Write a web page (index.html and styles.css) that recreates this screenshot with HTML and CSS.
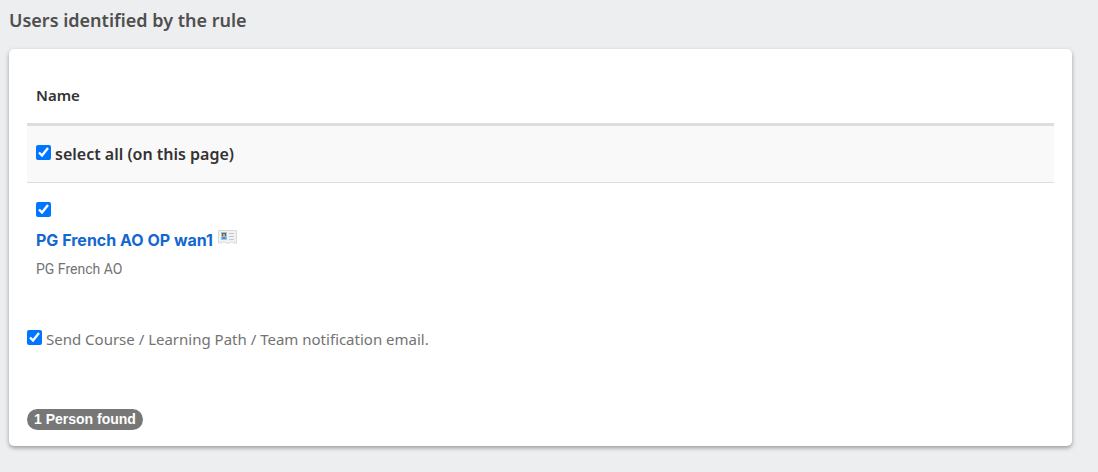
FILE: index.html
```
<!DOCTYPE html>
<html lang="en">

<head>
  <meta charset="utf-8">
  <title>Users identified by the rule</title>
  <link rel="stylesheet" href="styles.css">
</head>

<body>
  <h2 class="page-title">Users identified by the rule</h2>
  <div class="panel">
    <table class="users-table">
      <thead>
        <tr>
          <th scope="col">Name</th>
        </tr>
      </thead>
      <tbody>
        <tr class="select-row">
          <td>
            <input type="checkbox" id="selectAll" checked>
            <label for="selectAll">select all (on this page)</label>
          </td>
        </tr>
        <tr class="user-row">
          <td>
            <input type="checkbox" id="user1" aria-label="PG French AO OP wan1" checked>
            <div class="user-name">
              <a href="#">PG French AO OP wan1</a>
              <svg class="card-icon" viewBox="0 0 19 14" width="19" height="14" aria-hidden="true">
                <path d="M.5 .5h18v12.500h-3l-1-1h-2l-1 1h-4l-1-1h-2l-1 1h-3z" fill="#f2f2f2" stroke="#d8d8d8"/>
                <path d="M3 2h6v8h-6z" fill="#8fc5ee"/>
                <path d="M4 3h4v3h-4z" fill="#806345"/>
                <path d="M5 4h2v3h-2z" fill="#d5a478"/>
                <path d="M4 7h4v2h-4z" fill="#4d95d3"/>
                <path d="M11 3.500h5M11 6.500h5M11 9.500h5" stroke="#b9c9d5"/>
              </svg>
            </div>
            <div class="user-group">PG French AO</div>
          </td>
        </tr>
      </tbody>
    </table>
    <div class="notify">
      <input type="checkbox" id="notify" checked>
      <label for="notify">Send Course / Learning Path / Team notification email.</label>
    </div>
    <span class="badge">1 Person found</span>
  </div>
</body>

</html>
```
FILE: styles.css
```
* {
  box-sizing: border-box;
}

body {
  margin: 0;
  padding: 8px 26px 24px 9px;
  background-color: #edeef0;
  color: #737373;
  font-family: "Noto Sans", "Liberation Sans", sans-serif;
  font-size: 15px;
  line-height: 24px;
}

.page-title {
  margin: 0 0 17px;
  color: #4f4f4f;
  font-size: 18px;
  font-weight: 600;
  line-height: 24px;
}

.panel {
  padding: 18px 18px 16px;
  border-radius: 5px;
  background-color: #fff;
  box-shadow: 0 2px 4px rgba(0, 0, 0, 0.35);
}

.users-table {
  width: 100%;
  border-collapse: separate;
  border-spacing: 0;
}

.users-table th,
.users-table td {
  padding: 16px 9px;
  text-align: left;
}

.users-table th {
  border-bottom: 3px solid #ddd;
  color: #333;
  font-weight: 600;
}

.users-table .select-row td {
  border-bottom: 1px solid #ddd;
  background-color: #f9f9f9;
  color: #333;
  font-size: 16px;
  font-weight: 600;
}

input[type="checkbox"] {
  width: 15px;
  height: 15px;
  margin: 0;
}

.select-row td,
.notify {
  display: flex;
  align-items: flex-start;
  gap: 4px;
}

.select-row input,
.notify input {
  margin-top: 3px;
}

.users-table .user-row td {
  padding-top: 19px;
}

.user-row input {
  display: block;
}

.user-name {
  display: flex;
  gap: 5px;
  margin-top: 11px;
}

.user-name a {
  color: #1467cf;
  font-family: Inter, sans-serif;
  font-size: 16px;
  font-weight: bold;
  text-decoration: none;
}

.card-icon {
  margin-top: 2px;
}

.user-group {
  margin-top: 5px;
  font-family: Roboto, sans-serif;
  font-size: 14px;
}

.notify {
  margin-top: 30px;
}

.badge {
  display: inline-block;
  margin-top: 58px;
  padding: 0 7px;
  border-radius: 11px;
  background-color: #777;
  color: #fff;
  font-family: "Liberation Sans", Arial, sans-serif;
  font-size: 14px;
  font-weight: bold;
  line-height: 21px;
}
```
